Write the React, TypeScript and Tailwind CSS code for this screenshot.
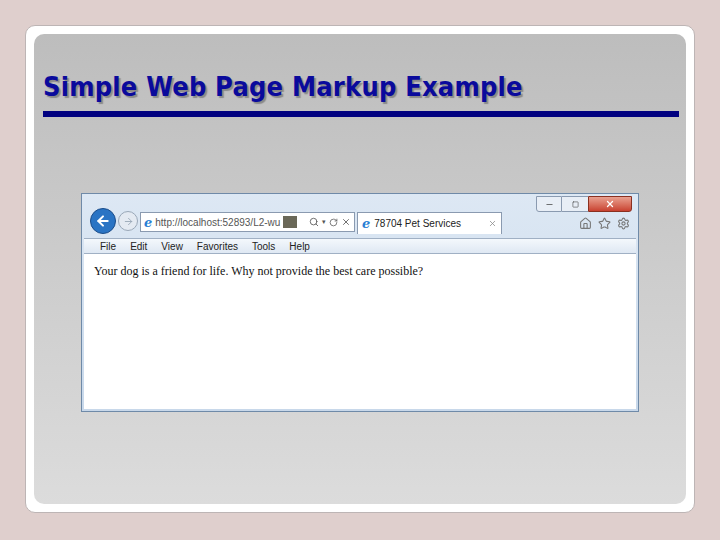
import { ArrowLeft, ArrowRight, Search, RotateCw, X, Home, Star, Settings, Minus, Square } from 'lucide-react';

const menu = ['File', 'Edit', 'View', 'Favorites', 'Tools', 'Help'];

const IeLogo = () => (
  <span className="text-[#2a7fd4] font-bold italic text-[13px] leading-none" style={{ fontFamily: '"DejaVu Serif", serif' }}>e</span>
);

export default function App() {
  return (
    <div className="w-[720px] h-[540px] bg-[#dfcfcd] pt-[25px] pl-[25px]" style={{ fontFamily: '"Liberation Sans", sans-serif' }}>
      <div className="w-[670px] h-[488px] bg-white rounded-[10px] p-[8px] border border-[#bdb5b5]">
        <div className="h-full rounded-[10px] bg-gradient-to-b from-[#bdbdbd] to-[#dcdcdc] px-[9px] pt-[36px]">
          <div className="text-[27px] font-bold text-[#0a0a9c] tracking-[0.2px] leading-[34px] [text-shadow:2px_2px_1px_#8a8a8a]" style={{ fontFamily: '"DejaVu Sans Condensed", "Liberation Sans Narrow", sans-serif' }}>
            Simple Web Page Markup Example
          </div>
          <div className="mt-[7px] h-[6px] w-[636px] bg-[#000080]" />

          <div className="mt-[76px] ml-[38px] w-[558px] h-[219px] border border-[#6f8aa8] bg-gradient-to-b from-[#dde8f4] to-[#c8d8ea] flex flex-col p-[2px]">
            <div className="h-[42px] relative flex items-end pb-[4px] px-[6px] gap-[2px]">
              <div className="absolute right-[4px] top-0 flex">
                <div className="w-[26px] h-[16px] border border-[#8a9ab0] bg-[#e8eef6] rounded-bl-[3px] flex items-center justify-center"><Minus size={9} className="text-[#444]" /></div>
                <div className="w-[26px] h-[16px] border-y border-[#8a9ab0] bg-[#e8eef6] flex items-center justify-center"><Square size={7} className="text-[#444]" /></div>
                <div className="w-[44px] h-[16px] border border-[#8a3020] bg-gradient-to-b from-[#e8a090] to-[#c84030] rounded-br-[3px] flex items-center justify-center"><X size={10} strokeWidth={3} className="text-white" /></div>
              </div>
              <div className="w-[26px] h-[26px] rounded-full bg-[#2a74c4] border border-[#1a4c8a] flex items-center justify-center"><ArrowLeft size={16} strokeWidth={3} className="text-white" /></div>
              <div className="w-[20px] h-[20px] rounded-full bg-[#e4eaf2] border border-[#9aa8b8] flex items-center justify-center mb-[3px]"><ArrowRight size={11} className="text-[#9aa8b8]" /></div>
              <div className="h-[20px] w-[215px] mb-[2px] bg-white border border-[#8a9ab0] flex items-center px-[3px] gap-[3px] text-[10px] text-[#555]">
                <IeLogo />
                <span>http://localhost:52893/L2-wu</span>
                <span className="w-[14px] h-[12px] bg-[#6a6858]" />
                <Search size={10} className="ml-auto text-[#555]" />
                <span className="text-[7px]">▾</span>
                <RotateCw size={9} className="text-[#555]" />
                <X size={10} className="text-[#555]" />
              </div>
              <div className="h-[22px] w-[145px] bg-white border border-[#8a9ab0] border-b-0 flex items-center px-[4px] gap-[4px] text-[10px] text-[#222]">
                <IeLogo />
                <span>78704 Pet Services</span>
                <X size={9} className="ml-auto text-[#888]" />
              </div>
              <div className="ml-auto flex gap-[6px] mb-[4px] text-[#777]">
                <Home size={13} /><Star size={13} /><Settings size={13} />
              </div>
            </div>
            <div className="h-[16px] bg-gradient-to-b from-[#f4f8fc] to-[#dfe8f3] border-y border-[#a0b0c4] flex items-center gap-[14px] px-[16px] text-[10px] text-[#222]">
              {menu.map((m) => <span key={m}>{m}</span>)}
            </div>
            <div className="flex-1 bg-white px-[10px] pt-[8px] text-[12px] text-[#111]" style={{ fontFamily: '"Liberation Serif", serif' }}>
              Your dog is a friend for life. Why not provide the best care possible?
            </div>
          </div>
        </div>
      </div>
    </div>
  );
}
